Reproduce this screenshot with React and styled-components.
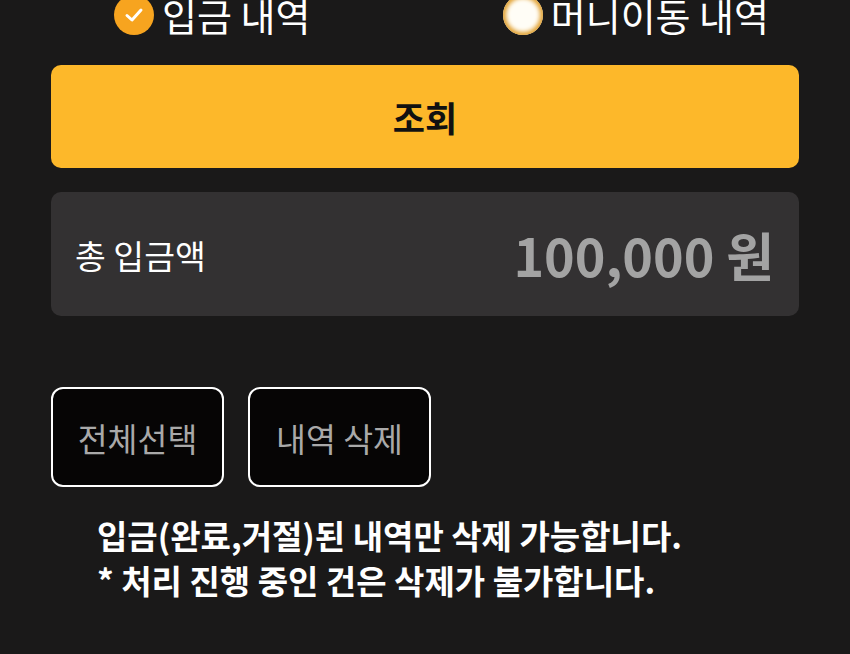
import React from "react";
import styled, { createGlobalStyle } from "styled-components";

const Global = createGlobalStyle`
  html, body { margin: 0; padding: 0; background: #1a1919; }
  body { font-family: "Noto Sans CJK KR", "Noto Sans", sans-serif; color: #fff; overflow: hidden; }
  * { box-sizing: border-box; }
`;

const Page = styled.div`
  width: 850px;
  height: 654px;
  background: #1a1919;
  padding: 0 51px;
  display: flex;
  flex-direction: column;
  overflow: hidden;
`;

const RadioRow = styled.div`
  display: flex;
  justify-content: space-between;
  align-items: center;
  height: 40px;
  margin-top: -5px;
  padding: 0 30px 0 63px;
`;

const RadioItem = styled.label`
  display: flex;
  align-items: center;
  gap: 8px;
  font-size: 38px;
  line-height: 40px;
  color: #fff;
`;

const Dot = styled.span`
  width: 40px;
  height: 40px;
  border-radius: 50%;
  display: flex;
  align-items: center;
  justify-content: center;
  flex: none;
  background: ${p => (p.$checked ? "#f7a41f" : "#fffdf6")};
  box-shadow: ${p => (p.$checked ? "none" : "inset 0 0 4px 3px #e2a233")};
`;

const SearchButton = styled.button`
  margin-top: 30px;
  height: 103px;
  width: 100%;
  border: none;
  border-radius: 10px;
  background: #fdb82a;
  color: #111;
  font-family: inherit;
  font-size: 35px;
  font-weight: 700;
  display: flex;
  align-items: center;
  justify-content: center;
`;

const SummaryBox = styled.div`
  margin-top: 24px;
  height: 124px;
  border-radius: 10px;
  background: #333132;
  display: flex;
  align-items: center;
  justify-content: space-between;
  padding: 0 25px 0 24px;
`;

const SummaryLabel = styled.span`
  font-size: 33.5px;
  color: #fff;
`;

const SummaryAmount = styled.span`
  font-size: 52px;
  font-weight: 700;
  color: #a3a3a3;
`;

const ActionRow = styled.div`
  margin-top: 71px;
  display: flex;
  gap: 24px;
`;

const ActionButton = styled.button`
  height: 100px;
  width: ${p => p.$w}px;
  border: 2px solid #fff;
  border-radius: 12px;
  background: #060505;
  color: #a9a9a9;
  font-family: inherit;
  font-size: 32.5px;
  display: flex;
  align-items: center;
  justify-content: center;
  padding: 0;
`;

const Notice = styled.div`
  margin-top: 26px;
  padding-left: 46px;
  font-size: 33px;
  font-weight: 700;
  line-height: 45px;
  color: #fff;
`;

const NoticeLine = styled.div`
  white-space: nowrap;
`;

export default function App() {
  return (
    <>
      <Global />
      <Page>
        <RadioRow>
          <RadioItem>
            <Dot $checked>
              <svg width="22" height="22" viewBox="0 0 22 22">
                <path d="M4 11.5 L9 16 L18 6" fill="none" stroke="#fff" strokeWidth="3" strokeLinecap="round" strokeLinejoin="round" />
              </svg>
            </Dot>
            입금 내역
          </RadioItem>
          <RadioItem>
            <Dot />
            머니이동 내역
          </RadioItem>
        </RadioRow>
        <SearchButton>조회</SearchButton>
        <SummaryBox>
          <SummaryLabel>총 입금액</SummaryLabel>
          <SummaryAmount>100,000 원</SummaryAmount>
        </SummaryBox>
        <ActionRow>
          <ActionButton $w={173}>전체선택</ActionButton>
          <ActionButton $w={183}>내역 삭제</ActionButton>
        </ActionRow>
        <Notice>
          <NoticeLine>입금(완료,거절)된 내역만 삭제 가능합니다.</NoticeLine>
          <NoticeLine>* 처리 진행 중인 건은 삭제가 불가합니다.</NoticeLine>
        </Notice>
      </Page>
    </>
  );
}
